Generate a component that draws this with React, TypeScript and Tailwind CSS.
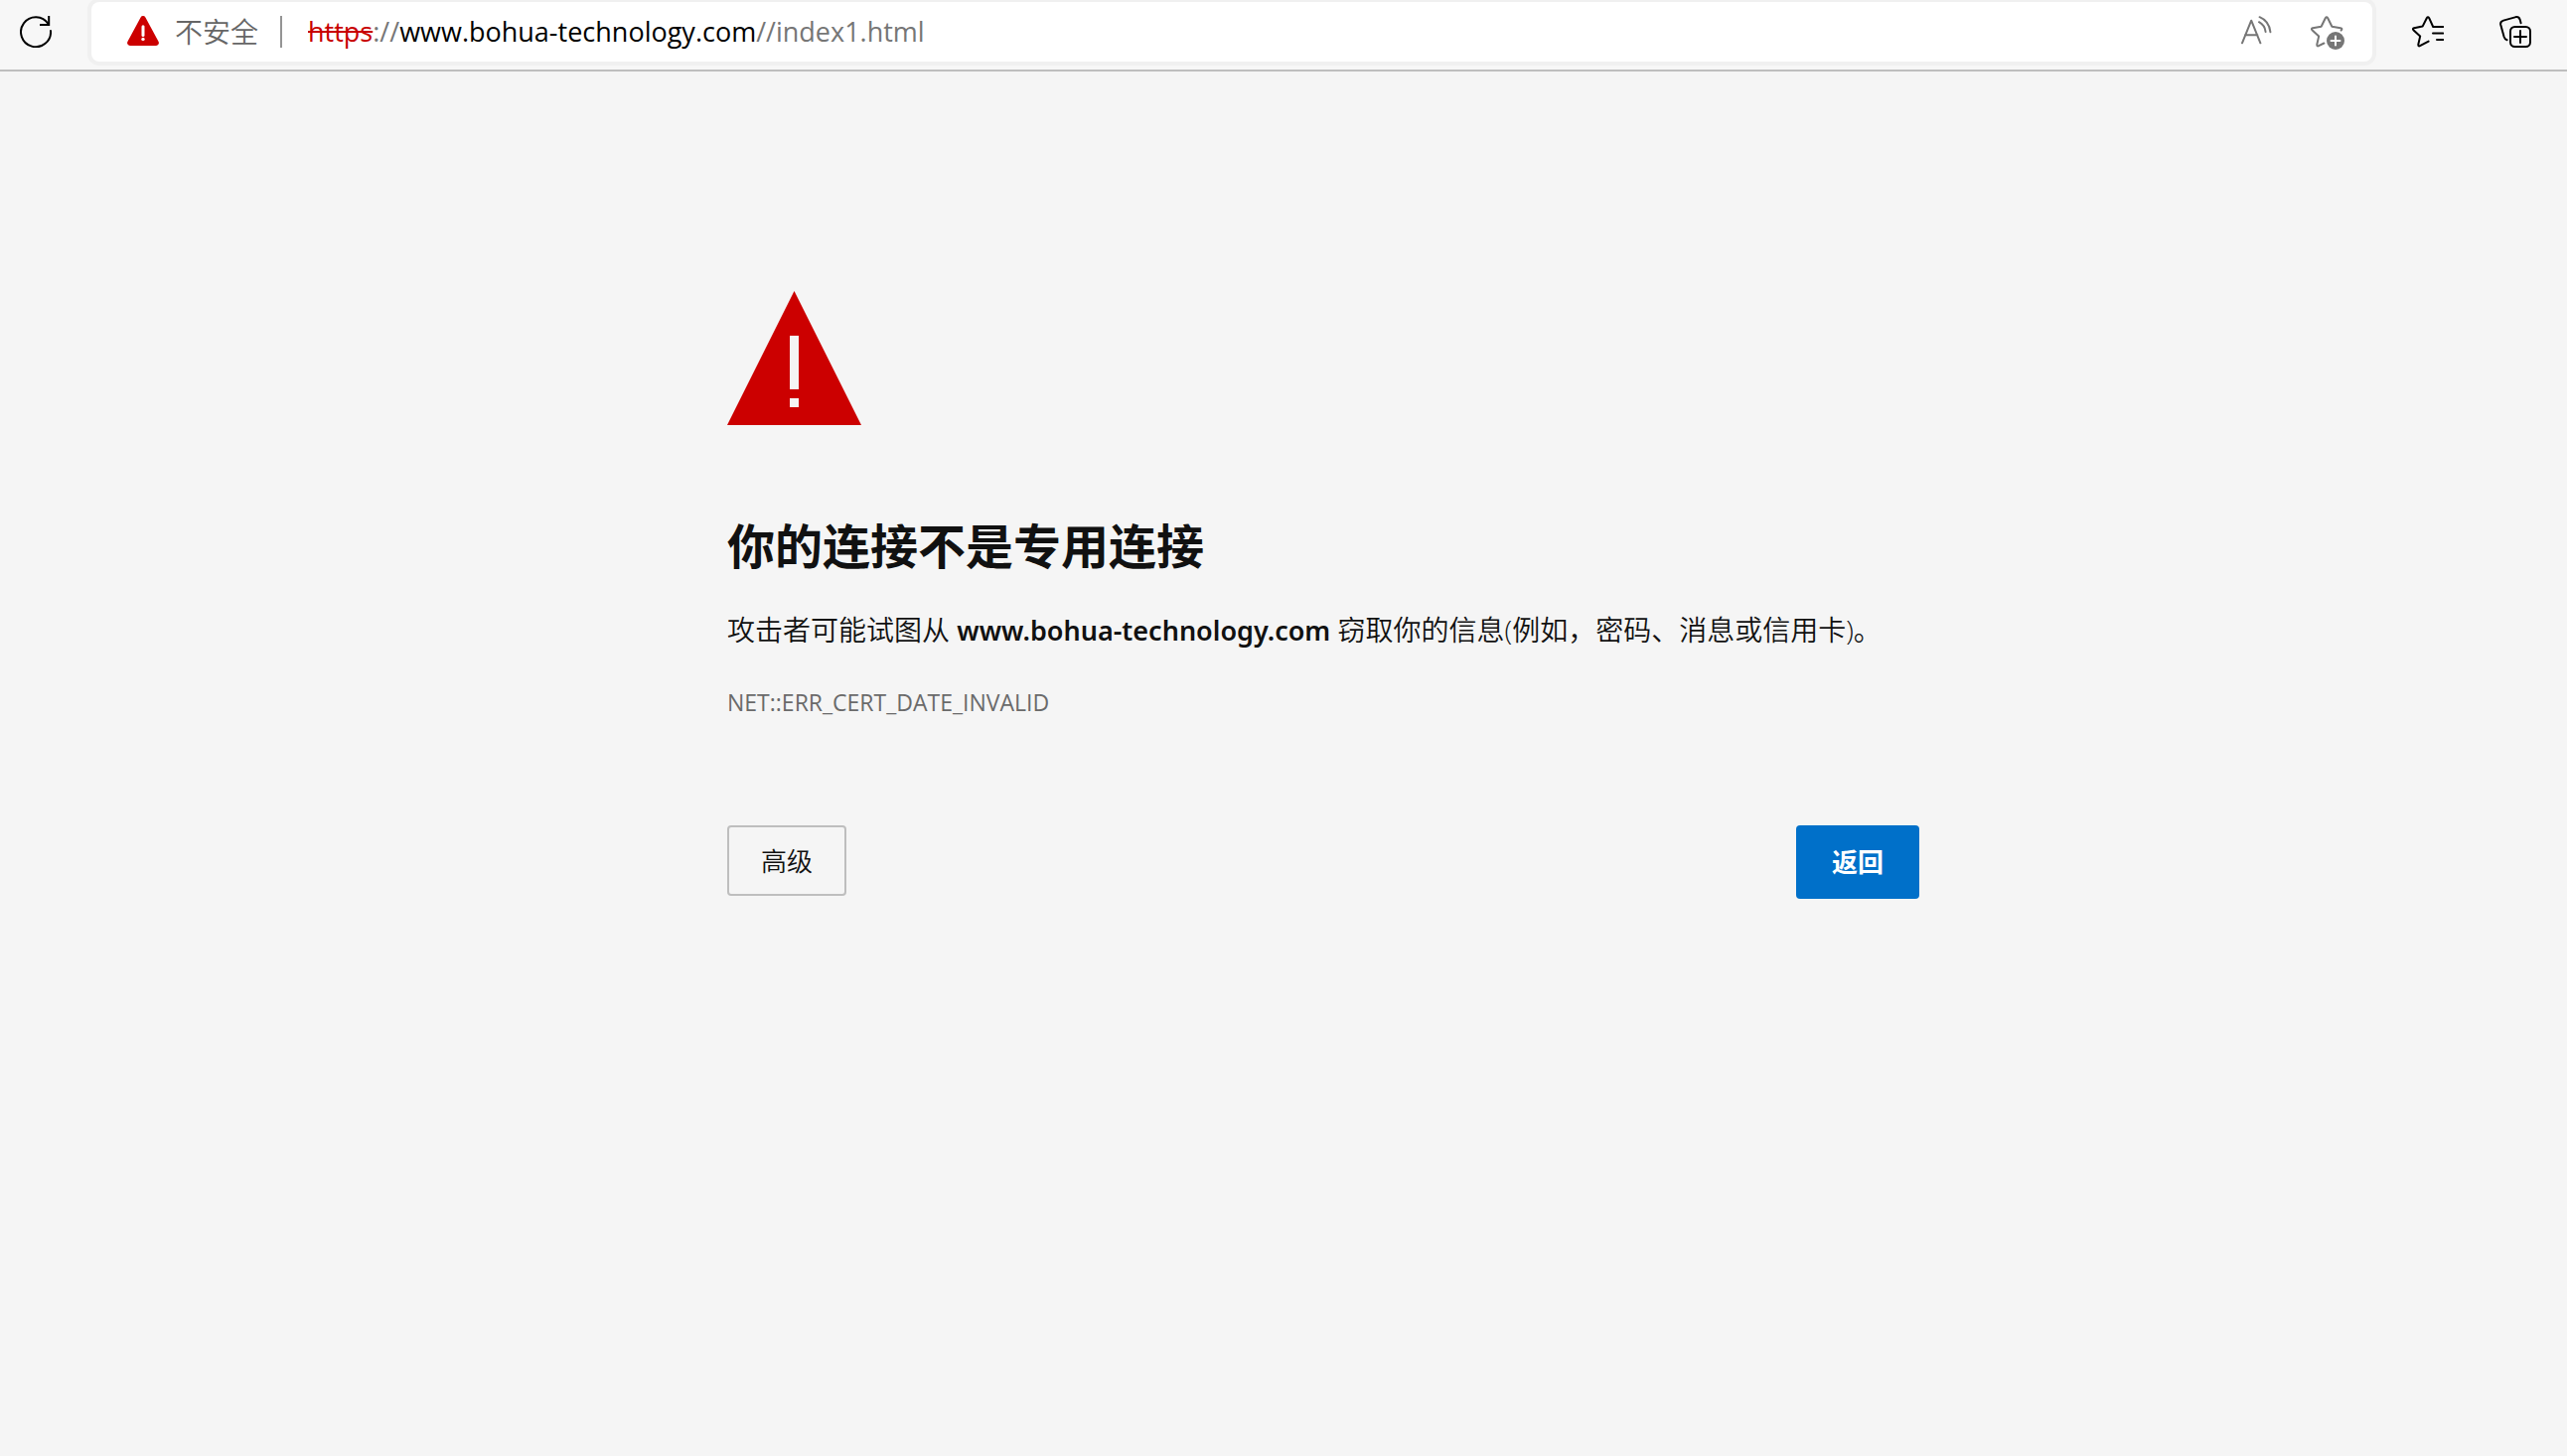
import React from "react";

const line = {
  fill: "none",
  stroke: "currentColor",
  strokeWidth: 2,
  strokeLinecap: "round",
  strokeLinejoin: "round",
} as const;

function ReloadIcon() {
  return (
    <svg className="size-8" viewBox="0 0 32 32" aria-hidden="true" {...line}>
      <path d="M31 15A15 15 0 1 1 28.6 8" />
      <path d="M29.2 1V9H21" strokeLinecap="square" strokeLinejoin="miter" />
    </svg>
  );
}

function SmallWarningIcon() {
  return (
    <svg className="size-8" viewBox="0 0 32 32" aria-hidden="true">
      <path
        d="M13.6 1.4a2.8 2.8 0 0 1 4.8 0L31.5 25.8a2.8 2.8 0 0 1-2.4 4.2H2.9a2.8 2.8 0 0 1-2.4-4.2Z"
        fill="#cc0000"
      />
      <path d="M16 10.8V19.5" stroke="#fff" strokeWidth="3" strokeLinecap="round" />
      <circle cx="16" cy="23.4" r="1.7" fill="#fff" />
    </svg>
  );
}

function ReadAloudIcon() {
  return (
    <svg className="size-8" viewBox="0 0 32 32" aria-hidden="true" {...line}>
      <path d="M1 27.3 10.2 4.7 19.4 27.3M4 19.2H16.4" />
      <path d="M18.6 1.2Q28.2 5.2 29.4 16.2M18 6.2Q23.8 9.4 24.6 16" />
    </svg>
  );
}

function StarAddIcon() {
  return (
    <svg className="size-9" viewBox="0 0 36 36" aria-hidden="true" {...line}>
      <path d="M30.6 14.6Q32.4 12.6 30 12.2L21.4 10.8 17.2 2.2Q16 .2 14.8 2.2L10.6 10.8 2 12.2Q.2 12.8 1.4 14.2L8.2 20.4 6.3 28.8Q6.2 31 8 30.2L13.4 27.5" />
      <circle cx="25" cy="25" r="9" fill="currentColor" stroke="none" />
      <path d="M20.5 25H29.5M25 20.5V29.5" stroke="#fff" />
    </svg>
  );
}

function FavoritesIcon() {
  return (
    <svg className="size-8" viewBox="0 0 32 32" aria-hidden="true" {...line}>
      <path d="M31.2 11H21.2L17.2 2.2Q16 .2 14.8 2.2L10.6 10.6 2 12.2Q.2 12.8 1.4 14.2L8.2 20.4 6.3 28.8Q6.2 31 8 30.2L16.6 25.6" />
      <path d="M21 17.5H31.2M25 24H31.2" />
    </svg>
  );
}

function CollectionsIcon() {
  return (
    <svg className="size-8" viewBox="0 0 32 32" aria-hidden="true" {...line}>
      <path d="M21.6 7.2 20.6 3.6Q19.6.6 16.6 1.1L4 4.6Q.6 5.6 1.2 8.8L4.6 21Q5.4 23.6 7.6 24.3" />
      <rect x="11" y="11" width="20" height="20" rx="4.5" />
      <path d="M15 21H27M21 15V27" />
    </svg>
  );
}

function LargeWarningIcon() {
  return (
    <svg className="block h-[135px] w-[135px]" viewBox="0 0 135 135" role="img" aria-label="警告">
      <path d="M67.5 0 135 135H0Z" fill="#cc0000" />
      <path d="M63 45h9v54h-9zM63 108h9v9h-9z" fill="#f5f5f5" />
    </svg>
  );
}

function Toolbar() {
  return (
    <header className="flex h-[72px] items-start border-b-2 border-[#bebebe] bg-[#f7f7f7] pr-9 pl-5">
      <button type="button" aria-label="刷新" className="mt-4 text-black">
        <ReloadIcon />
      </button>
      <div className="mt-0.5 ml-10 flex h-[60px] min-w-0 flex-1 items-center rounded-lg bg-white pr-[26px] pl-9 text-[28px] leading-9 text-[#767676] shadow-[0_0_0_4px_#f0f0f0]">
        <button type="button" className="flex shrink-0 items-center gap-4 text-[#666666]">
          <SmallWarningIcon />
          <span className="font-[350]">不安全</span>
        </button>
        <span className="ml-[22px] h-8 w-0.5 shrink-0 bg-[#949494]" />
        <div
          role="textbox"
          aria-label="地址栏"
          tabIndex={0}
          className="ml-[26px] min-w-0 flex-1 truncate text-[27px]"
        >
          <span className="text-[#c80000] line-through decoration-2">https</span>
          ://<span className="text-black">www.bohua-technology.com</span>//index1.html
        </div>
        <div className="flex shrink-0 items-center gap-[38px]">
          <button type="button" aria-label="大声朗读">
            <ReadAloudIcon />
          </button>
          <button type="button" aria-label="将此页面添加到收藏夹" className="pt-1">
            <StarAddIcon />
          </button>
        </div>
      </div>
      <div className="mt-4 ml-10 flex gap-14 text-black">
        <button type="button" aria-label="收藏夹">
          <FavoritesIcon />
        </button>
        <button type="button" aria-label="集锦">
          <CollectionsIcon />
        </button>
      </div>
    </header>
  );
}

export default function App() {
  return (
    <div className="min-h-screen bg-[#f5f5f5] font-['Open_Sans','Noto_Sans_CJK_SC',sans-serif] text-[#111111]">
      <Toolbar />
      <main className="pt-[221px] pl-20">
        <div className="mx-auto max-w-[1200px]">
          <LargeWarningIcon />
          <h1 className="mt-[90px] text-[48px] leading-[64px] font-bold">你的连接不是专用连接</h1>
          <p className="mt-8 text-[28px] leading-10 font-[350]">
            攻击者可能试图从{" "}
            <strong className="font-['Noto_Sans',sans-serif] text-[27px] font-semibold">www.bohua-technology.com</strong>{" "}
            窃取你的信息(例如，密码、消息或信用卡)。
          </p>
          <p className="mt-9 text-[23px] leading-8 text-[#6a6a6a]">NET::ERR_CERT_DATE_INVALID</p>
          <div className="mt-[108px] flex items-start justify-between">
            <button
              type="button"
              className="h-[71px] rounded-sm border-2 border-[#bebebe] px-8 text-[26px] leading-9 font-[350]"
            >
              高级
            </button>
            <button
              type="button"
              className="h-[74px] rounded-sm bg-[#0070c9] px-9 text-[26px] leading-9 font-bold text-white"
            >
              返回
            </button>
          </div>
        </div>
      </main>
    </div>
  );
}
